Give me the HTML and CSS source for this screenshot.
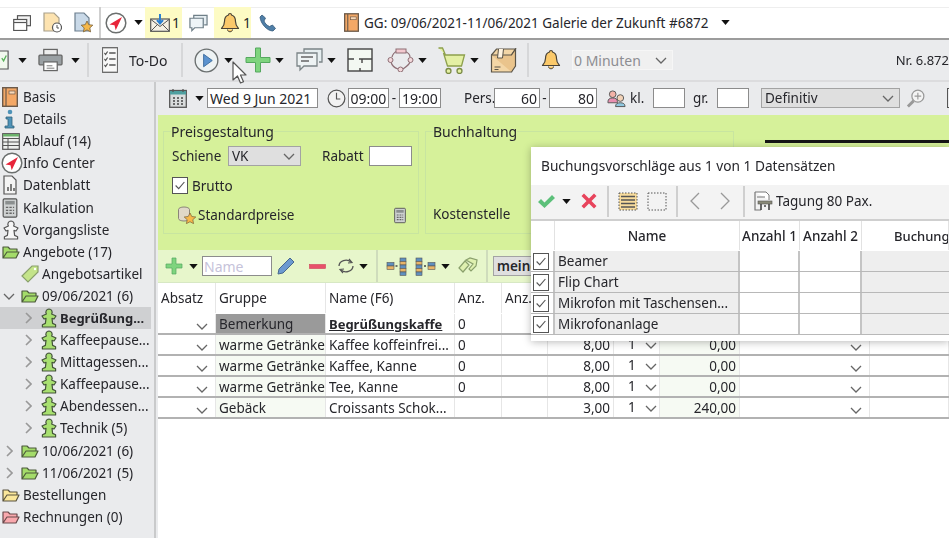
FILE: index.html
```html
<!DOCTYPE html>
<html lang="de">
<head>
<meta charset="utf-8">
<title>GG: Galerie der Zukunft</title>
<link rel="stylesheet" href="styles.css">
</head>
<body>
<svg class="defs" aria-hidden="true">
  <symbol id="caret" viewBox="0 0 10 6"><path d="M0 0h10L5 6z" fill="#111"/></symbol>
  <symbol id="chev" viewBox="0 0 12 7"><path d="M1 1l5 5 5-5" fill="none" stroke="#666" stroke-width="1.3"/></symbol>
  <symbol id="chevr" viewBox="0 0 7 12"><path d="M1 1l5 5-5 5" fill="none" stroke="#999" stroke-width="1.6"/></symbol>
  <symbol id="book" viewBox="0 0 16 20"><rect x=".7" y=".7" width="14.6" height="18.6" fill="#f4a866" stroke="#6c5a4a" stroke-width="1.4"/><path d="M4 1v18" stroke="#6c5a4a" stroke-width="1.2"/><rect x="7" y="4" width="6" height="3" fill="#f9d9b8" stroke="#6c5a4a" stroke-width=".7"/></symbol>
  <symbol id="folderG" viewBox="0 0 18 14"><path d="M1 13V2h5l2 2h7v3H5L1 13h13l3-6H5" fill="#a4dc6a" stroke="#4c5a3c" stroke-width="1.2" stroke-linejoin="round"/></symbol>
  <symbol id="folderY" viewBox="0 0 18 14"><path d="M1 13V2h5l2 2h7v3H5L1 13h13l3-6H5" fill="#fbe79a" stroke="#5a5440" stroke-width="1.2" stroke-linejoin="round"/></symbol>
  <symbol id="folderR" viewBox="0 0 18 14"><path d="M1 13V2h5l2 2h7v3H5L1 13h13l3-6H5" fill="#f9a8ad" stroke="#6a4a4c" stroke-width="1.2" stroke-linejoin="round"/></symbol>
  <symbol id="pawnG" viewBox="0 0 18 20"><path d="M9 1a3.2 3.2 0 0 1 2.6 5l4.4 2-2 3-2-.6.6 5 3 1.4V19H2.400v-2.200l3-1.400.6-5-2 .6-2-3 4.400-2A3.200 3.200 0 0 1 9 1z" fill="#a8e070" stroke="#44543a" stroke-width="1.200" stroke-linejoin="round"/></symbol>
  <symbol id="pawnW" viewBox="0 0 18 20"><path d="M9 1a3.2 3.2 0 0 1 2.6 5l4.4 2-2 3-2-.6.6 5 3 1.400V19H2.400v-2.200l3-1.400.6-5-2 .6-2-3 4.400-2A3.200 3.200 0 0 1 9 1z" fill="#f6f6f6" stroke="#555" stroke-width="1.200" stroke-linejoin="round"/></symbol>
  <symbol id="compass" viewBox="0 0 22 22"><circle cx="11" cy="11" r="9.800" fill="#fff" stroke="#6b6f6e" stroke-width="1.500"/><path d="M17 5L4.500 12.500l5 .8 1.200 5z" fill="#e8253a"/></symbol>
  <symbol id="calc" viewBox="0 0 13 17"><rect x=".7" y=".7" width="11.600" height="15.600" rx="1" fill="#cfd2d2" stroke="#555"/><rect x="2.500" y="2.500" width="8" height="3" fill="#8b8f8f"/><path d="M3 8h2M6 8h2M9 8h1M3 10.500h2M6 10.500h2M9 10.500h1M3 13h2M6 13h2M9 13h1" stroke="#666" stroke-width="1.200"/></symbol>
  <symbol id="bell" viewBox="0 0 20 22"><path d="M10 1.500c1 0 1.500.8 1.500 1.500 3 .8 4 3.500 4 6.500 0 3.500 1 5 3 7H1.500c2-2 3-3.500 3-7 0-3 1-5.700 4-6.500 0-.7.500-1.500 1.500-1.500z" fill="#fbc96a" stroke="#4a4336" stroke-width="1.200" stroke-linejoin="round"/><path d="M7.500 17.500c0 3 5 3 5 0" fill="#fbc96a" stroke="#4a4336"/></symbol>
  <symbol id="chat" viewBox="0 0 20 18"><path d="M5 4V1h14v10h-3" fill="#e6eef2" stroke="#6f7f88" stroke-width="1.300"/><path d="M1 4h14v10H6l-3 3v-3H1z" fill="#eef4f7" stroke="#6f7f88" stroke-width="1.300"/></symbol>
</svg>

<header class="titlebar">
  <svg class="ic t-win" viewBox="0 0 18 16"><rect x="4.500" y=".7" width="13" height="10" fill="#f3f3f3" stroke="#555" stroke-width="1.200"/><rect x=".7" y="4.500" width="13" height="11" fill="#fff" stroke="#555" stroke-width="1.200"/><path d="M1 7.500h12" stroke="#555" stroke-width="1.200"/></svg>
  <svg class="ic t-doc" viewBox="0 0 19 21"><path d="M1 1h10l5 5v13H1z" fill="#fde3b0" stroke="#a8a08c" stroke-width="1.200"/><circle cx="14" cy="15.500" r="4.500" fill="#fff" stroke="#555" stroke-width="1.200"/><path d="M14 13v3h2" fill="none" stroke="#555"/></svg>
  <svg class="ic t-doc2" viewBox="0 0 19 21"><path d="M1 1h9l5 5v13H1z" fill="#c9d9e8" stroke="#6c7e8e" stroke-width="1.200"/><path d="M13 9l1.800 3.700 4 .5-3 2.700.8 4-3.600-2-3.600 2 .8-4-3-2.700 4-.5z" fill="#f6b84a" stroke="#77603a" stroke-width=".8"/></svg>
  <span class="tsep"></span>
  <svg class="ic t-comp"><use href="#compass"/></svg>
  <svg class="caret t-caret"><use href="#caret"/></svg>
  <div class="badge t-mail">
    <svg class="ic mail" viewBox="0 0 20 18"><rect x=".7" y="5" width="18.600" height="12.300" fill="#f4f0e4" stroke="#555" stroke-width="1.200"/><path d="M1 5.500l9 7 9-7M1 17l7-7M19 17l-7-7" fill="none" stroke="#555"/><path d="M10 0v9M7 6l3 3.500L13 6" fill="none" stroke="#2a7fd0" stroke-width="2"/></svg>
    <span>1</span>
  </div>
  <svg class="ic t-chat"><use href="#chat"/></svg>
  <div class="badge t-bell">
    <svg class="ic bell1"><use href="#bell"/></svg>
    <span>1</span>
  </div>
  <svg class="ic t-phone" viewBox="0 0 18 18"><path d="M3 1l3.500 3-1.500 3c1 2.500 3 4.500 5.500 5.500l3-1.500 3 3.500-2.500 2.500C8 17 1.500 9.500 1 3z" fill="#4f7fa8" stroke="#35597a" stroke-width=".8"/></svg>
  <svg class="ic t-book"><use href="#book"/></svg>
  <span class="doc-title">GG: 09/06/2021-11/06/2021 Galerie der Zukunft #6872</span>
  <svg class="caret t-tcaret"><use href="#caret"/></svg>
</header>

<nav class="toolbar">
  <svg class="ic m-cut" viewBox="0 0 10 22"><path d="M-5 1H9v20H-5z" fill="#f2f8ee" stroke="#555" stroke-width="1.300"/><path d="M2 9l2 3 3-6" fill="none" stroke="#5bb25b" stroke-width="1.500"/></svg>
  <svg class="caret m-c1"><use href="#caret"/></svg>
  <svg class="ic m-print" viewBox="0 0 26 24"><rect x="6" y="1" width="14" height="6" fill="#eee" stroke="#666" stroke-width="1.300"/><rect x="1" y="7" width="24" height="10" rx="1" fill="#9aa0a3" stroke="#666" stroke-width="1.300"/><rect x="6" y="14" width="14" height="9" fill="#fff" stroke="#666" stroke-width="1.300"/><path d="M9 18h6M9 20.500h8" stroke="#777"/></svg>
  <svg class="caret m-c2"><use href="#caret"/></svg>
  <span class="sep m-s1"></span>
  <svg class="ic m-todo" viewBox="0 0 20 26" preserveAspectRatio="none"><rect x=".7" y=".7" width="18.600" height="24.600" fill="#f8f8f8" stroke="#666" stroke-width="1.300"/><path d="M3 6l1.500 1.500L7 4.500M3 12l1.500 1.500L7 10.500M3 18l1.500 1.500L7 16.500" fill="none" stroke="#555" stroke-width="1.200"/><path d="M9 6h8M9 12h8M9 18h8" stroke="#555" stroke-width="1.300"/></svg>
  <span class="tool-label">To-Do</span>
  <span class="sep m-s2"></span>
  <svg class="ic m-play" viewBox="0 0 26 26"><circle cx="13" cy="13" r="11.800" fill="#eef3f4" stroke="#6b7070" stroke-width="1.400"/><path d="M10 6.500l9 6.500-9 6.500z" fill="#5b93cf" stroke="#3f6f9f"/></svg>
  <svg class="caret m-c3"><use href="#caret"/></svg>
  <svg class="ic m-plus" viewBox="0 0 26 26"><path d="M10.500 1h5v9.500H25v5h-9.500V25h-5v-9.500H1v-5h9.500z" fill="#7ed47e" stroke="#55a85f"/></svg>
  <svg class="caret m-c4"><use href="#caret"/></svg>
  <svg class="ic m-chat" viewBox="0 0 27 24"><path d="M8 4V1h18v13h-3" fill="#e6eef0" stroke="#7b8487" stroke-width="1.300"/><path d="M1 5h20v13H8l-4 4v-4H1z" fill="#eef3f4" stroke="#7b8487" stroke-width="1.300"/><path d="M5 9h12M5 13h8" stroke="#666" stroke-width="1.300"/></svg>
  <svg class="caret m-c5"><use href="#caret"/></svg>
  <svg class="ic m-plan" viewBox="0 0 26 24"><rect x="1" y="1" width="24" height="22" fill="#f3f8f2" stroke="#444" stroke-width="1.400"/><path d="M1 11h6M12 11h13M15 11v4M13 23v-3" stroke="#444" stroke-width="1.400"/></svg>
  <svg class="ic m-flow" viewBox="0 0 27 24"><g fill="none" stroke="#8d6e74" stroke-width="1.200"><path d="M5 9c1-4 3-5 5-6M17 3c3 1 6 3 6 6M23 14c-1 3-4 5-7 7M11 21c-3-1-6-3-7-7"/></g><rect x="9" y="1" width="10" height="4" fill="#f3c9cf" stroke="#8d6e74"/><circle cx="3.500" cy="12" r="2.500" fill="#f3d8db" stroke="#8d6e74"/><circle cx="23.500" cy="12" r="2.500" fill="#f3d8db" stroke="#8d6e74"/><circle cx="13.500" cy="21.500" r="2.500" fill="#f3d8db" stroke="#8d6e74"/></svg>
  <svg class="caret m-c6"><use href="#caret"/></svg>
  <svg class="ic m-cart" viewBox="0 0 29 27"><path d="M1 1h4l3 7h19l-3 11H10L6 6" fill="#e4f0a4" stroke="#8da04c" stroke-width="1.300"/><circle cx="11" cy="24" r="2.500" fill="#e4f0a4" stroke="#7a8a44" stroke-width="1.300"/><circle cx="22" cy="24" r="2.500" fill="#e4f0a4" stroke="#7a8a44" stroke-width="1.300"/></svg>
  <svg class="caret m-c7"><use href="#caret"/></svg>
  <svg class="ic m-box" viewBox="0 0 26 25"><path d="M1 7l5-6h19l-4 6v17H1z" fill="#f3d6a6" stroke="#5a5448" stroke-width="1.200"/><path d="M1 7h20l4-6v17l-4 6" fill="#eac48c" stroke="#5a5448" stroke-width="1.200"/><path d="M8 1L7 10h5l1-9" fill="#fff3df" stroke="#5a5448"/><path d="M4 19h6M4 21.500h4" stroke="#5a5448"/></svg>
  <span class="sep m-s3"></span>
  <svg class="ic m-bell"><use href="#bell"/></svg>
  <div class="minutes"><span>0 Minuten</span><svg class="chev"><use href="#chev"/></svg></div>
  <span class="nr">Nr. 6.872</span>
</nav>

<div class="workspace">
  <aside class="tree">
    <div class="node l0"><svg class="ic ni"><use href="#book"/></svg>Basis</div>
    <div class="node l0"><svg class="ic ni" viewBox="0 0 16 20"><circle cx="8" cy="3" r="2.300" fill="#4f93b8"/><path d="M4 8h6v9h2v2H3v-2h3V10H4z" fill="#4f93b8" stroke="#33627c" stroke-width=".8"/></svg>Details</div>
    <div class="node l0"><svg class="ic ni-wide" viewBox="0 0 18 17"><rect x=".7" y=".7" width="16.600" height="15.600" fill="#eef0ee" stroke="#555" stroke-width="1.200"/><rect x="1" y="1" width="16" height="2.500" fill="#6bb26b"/><path d="M1 5.500h16M1 9h16M1 12.500h16M6 5.500v11" stroke="#555"/></svg>Ablauf (14)</div>
    <div class="node l0"><svg class="ic ni-comp"><use href="#compass"/></svg>Info Center</div>
    <div class="node l0"><svg class="ic ni" viewBox="0 0 16 20"><path d="M2 1h8l4 4v14H2z" fill="#f4f4f4" stroke="#555" stroke-width="1.200"/><path d="M6 16v-4M9 16V9M12 16v-3" stroke="#555" stroke-width="1.500"/></svg>Datenblatt</div>
    <div class="node l0"><svg class="ic ni"><use href="#calc"/></svg>Kalkulation</div>
    <div class="node l0"><svg class="ic pw"><use href="#pawnW"/></svg>Vorgangsliste</div>
    <div class="node l0"><svg class="ic fo"><use href="#folderG"/></svg>Angebote (17)</div>
    <div class="node l1"><svg class="ic tagi" viewBox="0 0 18 18"><path d="M1 11L11 1h6v6L7 17z" fill="#c4e48a" stroke="#8aa06c" stroke-width="1.200"/><circle cx="14" cy="4" r="1.200" fill="#fff"/></svg>Angebotsartikel</div>
    <div class="node l1 has-chev"><svg class="exp-d"><use href="#chev"/></svg><svg class="ic fo"><use href="#folderG"/></svg>09/06/2021 (6)</div>
    <div class="node l2 selected"><svg class="exp-r"><use href="#chevr"/></svg><svg class="ic pw"><use href="#pawnG"/></svg>Begrüßung...</div>
    <div class="node l2"><svg class="exp-r"><use href="#chevr"/></svg><svg class="ic pw"><use href="#pawnG"/></svg>Kaffeepause...</div>
    <div class="node l2"><svg class="exp-r"><use href="#chevr"/></svg><svg class="ic pw"><use href="#pawnG"/></svg>Mittagessen...</div>
    <div class="node l2"><svg class="exp-r"><use href="#chevr"/></svg><svg class="ic pw"><use href="#pawnG"/></svg>Kaffeepause...</div>
    <div class="node l2"><svg class="exp-r"><use href="#chevr"/></svg><svg class="ic pw"><use href="#pawnG"/></svg>Abendessen...</div>
    <div class="node l2"><svg class="exp-r"><use href="#chevr"/></svg><svg class="ic pw"><use href="#pawnG"/></svg>Technik (5)</div>
    <div class="node l1 has-chev"><svg class="exp-r1"><use href="#chevr"/></svg><svg class="ic fo"><use href="#folderG"/></svg>10/06/2021 (6)</div>
    <div class="node l1 has-chev"><svg class="exp-r1"><use href="#chevr"/></svg><svg class="ic fo"><use href="#folderG"/></svg>11/06/2021 (5)</div>
    <div class="node l0"><svg class="ic fo"><use href="#folderY"/></svg>Bestellungen</div>
    <div class="node l0"><svg class="ic fo"><use href="#folderR"/></svg>Rechnungen (0)</div>
  </aside>

  <main class="content">
    <div class="daterow">
      <svg class="ic d-cal" viewBox="0 0 18 20"><rect x=".7" y="2.500" width="16.600" height="16.800" fill="#d9dcdc" stroke="#555" stroke-width="1.300"/><rect x="1" y="3" width="16" height="3.500" fill="#4f9f9f"/><path d="M4 1v3M14 1v3" stroke="#555" stroke-width="1.300"/><path d="M4 10h2M8 10h2M12 10h2M4 13h2M8 13h2M12 13h2M4 16h2M8 16h2M12 16h2" stroke="#444" stroke-width="1.500"/></svg>
      <svg class="caret d-c"><use href="#caret"/></svg>
      <span class="box d-date">Wed 9 Jun 2021</span>
      <svg class="ic d-clock" viewBox="0 0 20 20"><circle cx="10" cy="10" r="8.800" fill="#f2f2f2" stroke="#555" stroke-width="1.300"/><path d="M10 4v6.500h4" fill="none" stroke="#555" stroke-width="1.200"/></svg>
      <span class="box d-time">09:00</span>
      <span class="dash">-</span>
      <span class="box d-time">19:00</span>
      <span class="lbl d-pers">Pers.</span>
      <span class="box d-num">60</span>
      <span class="dash d-d2">-</span>
      <span class="box d-num">80</span>
      <svg class="ic d-ppl" viewBox="0 0 20 19"><circle cx="6" cy="5" r="3.500" fill="#f3b3a8" stroke="#555"/><path d="M1 13c0-3 2-4 5-4s5 1 5 4v1H1z" fill="#e88fb0" stroke="#555"/><circle cx="14" cy="9" r="3.500" fill="#f3d3b8" stroke="#555"/><path d="M9 18c0-3 2-4 5-4s5 1 5 4z" fill="#8fc8e0" stroke="#555"/></svg>
      <span class="lbl d-kl">kl.</span>
      <span class="box d-sm"></span>
      <span class="lbl d-gr">gr.</span>
      <span class="box d-sm"></span>
      <div class="select d-status"><span>Definitiv</span><svg class="chev"><use href="#chev"/></svg></div>
      <svg class="ic d-zoom" viewBox="0 0 20 20"><circle cx="12.500" cy="7.500" r="6.300" fill="#f4f4f4" stroke="#999" stroke-width="1.300"/><path d="M12.500 4v7M9 7.500h7" stroke="#999" stroke-width="1.200"/><path d="M8 12.500L2 18.500" stroke="#999" stroke-width="3"/></svg>
      <span class="d-cut"></span>
    </div>

    <section class="green">
      <fieldset class="group g-price">
        <legend>Preisgestaltung</legend>
        <div class="frow">
          <span class="f-lab">Schiene</span>
          <div class="select s-vk"><span>VK</span><svg class="chev"><use href="#chev"/></svg></div>
          <span class="rabatt">Rabatt</span>
          <span class="box r-box"></span>
        </div>
        <label class="brutto"><span class="check"><svg viewBox="0 0 16 16"><path d="M3 8l3.500 3.500L13 4" fill="none" stroke="#555" stroke-width="1.300"/></svg></span>Brutto</label>
        <div class="frow std">
          <svg class="ic std-i" viewBox="0 0 19 18"><ellipse cx="7" cy="3.500" rx="5.500" ry="2.500" fill="#e0d8c8" stroke="#8a8478"/><path d="M1.500 3.500v9c0 1.500 2.500 2.500 5.500 2.500s5.500-1 5.500-2.500v-9" fill="#e0d8c8" stroke="#8a8478"/><path d="M13 7l1.800 3.500 4 .5-3 2.700.8 4-3.600-2-3.600 2 .8-4-3-2.700 4-.5z" fill="#f6b84a" stroke="#77603a" stroke-width=".7"/></svg>
          <span>Standardpreise</span>
          <svg class="ic std-c"><use href="#calc"/></svg>
        </div>
      </fieldset>
      <fieldset class="group g-book">
        <legend>Buchhaltung</legend>
        <div class="kst">Kostenstelle</div>
      </fieldset>
    </section>

    <div class="gridbar">
      <svg class="ic b-plus" viewBox="0 0 18 18"><path d="M7 1h4v6h6v4h-6v6H7v-6H1V7h6z" fill="#7ed47e" stroke="#55a85f" stroke-width=".7"/></svg>
      <svg class="caret b-c1"><use href="#caret"/></svg>
      <span class="box b-name">Name</span>
      <svg class="ic b-pen" viewBox="0 0 18 18"><path d="M1 17l1-5L13 1l4 4L6 16z" fill="#6c9ad0" stroke="#47688e"/></svg>
      <svg class="ic b-minus" viewBox="0 0 17 5"><rect x=".5" y=".5" width="16" height="4" fill="#e8506a" stroke="#d04058" stroke-width=".6"/></svg>
      <svg class="ic b-sync" viewBox="0 0 18 16"><path d="M2 8a7 6 0 0 1 12-4M16 8a7 6 0 0 1-12 4" fill="none" stroke="#555" stroke-width="1.300"/><path d="M12 1l3 3.500-4 .5M6 15l-3-3.500 4-.5" fill="none" stroke="#555" stroke-width="1.200"/></svg>
      <svg class="caret b-c2"><use href="#caret"/></svg>
      <span class="sep b-s1"></span>
      <svg class="ic b-tree1" viewBox="0 0 21 19"><g stroke="#555" stroke-width=".6"><rect x="14" y="1" width="6" height="3.400" fill="#5f8fbf"/><rect x="14" y="4.500" width="6" height="3.400" fill="#e8b468"/><rect x="14" y="8" width="6" height="3.400" fill="#5f8fbf"/><rect x="14" y="11.500" width="6" height="3.400" fill="#e8b468"/><rect x="14" y="15" width="6" height="3.400" fill="#5f8fbf"/><rect x="1" y="5.500" width="7" height="3.500" fill="#5f8fbf"/><rect x="1" y="9" width="7" height="3.500" fill="#e8b468"/></g><path d="M9.500 9h2" stroke="#444" stroke-width="1.500"/></svg>
      <svg class="ic b-tree2" viewBox="0 0 21 19"><g stroke="#555" stroke-width=".6"><rect x="1" y="1" width="6" height="3.400" fill="#5f8fbf"/><rect x="1" y="4.500" width="6" height="3.400" fill="#e8b468"/><rect x="1" y="8" width="6" height="3.400" fill="#5f8fbf"/><rect x="1" y="11.500" width="6" height="3.400" fill="#e8b468"/><rect x="1" y="15" width="6" height="3.400" fill="#5f8fbf"/><rect x="13" y="5.500" width="7" height="3.500" fill="#5f8fbf"/><rect x="13" y="9" width="7" height="3.500" fill="#e8b468"/></g><path d="M9 9h2" stroke="#444" stroke-width="1.500"/></svg>
      <svg class="caret b-c3"><use href="#caret"/></svg>
      <svg class="ic b-tag" viewBox="0 0 20 18"><path d="M1 11l6-7 4 4-6 7zM8 3l4-2 7 2-1 6-5 5-2-2 4-5z" fill="#dff0b0" stroke="#8aa06c" stroke-width="1.200"/></svg>
      <span class="sep b-s2"></span>
      <span class="select b-view">meine</span>
    </div>

    <div class="table">
      <div class="tr th">
        <span>Absatz</span><span>Gruppe</span><span>Name (F6)</span><span>Anz.</span><span>Anz.</span><span></span><span></span><span></span><span></span><span></span>
      </div>
      <div class="tr">
        <span class="c-abs"><svg class="chev"><use href="#chev"/></svg></span><span class="c-grp c-dark">Bemerkung</span><span class="c-name c-bold">Begrüßungskaffe</span><span>0</span><span></span><span></span><span></span><span></span><span></span><span></span>
      </div>
      <div class="tr">
        <span class="c-abs"><svg class="chev"><use href="#chev"/></svg></span><span class="c-grp">warme Getränke</span><span class="c-name">Kaffee koffeinfrei...</span><span>0</span><span></span><span class="num">8,00</span><span class="c-qty">1<svg class="chev"><use href="#chev"/></svg></span><span class="num c-tint">0,00</span><span class="c-abs"><svg class="chev"><use href="#chev"/></svg></span><span></span>
      </div>
      <div class="tr">
        <span class="c-abs"><svg class="chev"><use href="#chev"/></svg></span><span class="c-grp">warme Getränke</span><span class="c-name">Kaffee, Kanne</span><span>0</span><span></span><span class="num">8,00</span><span class="c-qty">1<svg class="chev"><use href="#chev"/></svg></span><span class="num c-tint">0,00</span><span class="c-abs"><svg class="chev"><use href="#chev"/></svg></span><span></span>
      </div>
      <div class="tr">
        <span class="c-abs"><svg class="chev"><use href="#chev"/></svg></span><span class="c-grp">warme Getränke</span><span class="c-name">Tee, Kanne</span><span>0</span><span></span><span class="num">8,00</span><span class="c-qty">1<svg class="chev"><use href="#chev"/></svg></span><span class="num c-tint">0,00</span><span class="c-abs"><svg class="chev"><use href="#chev"/></svg></span><span></span>
      </div>
      <div class="tr">
        <span class="c-abs"><svg class="chev"><use href="#chev"/></svg></span><span class="c-grp">Gebäck</span><span class="c-name">Croissants Schok...</span><span></span><span></span><span class="num">3,00</span><span class="c-qty">1<svg class="chev"><use href="#chev"/></svg></span><span class="num c-tint">240,00</span><span class="c-abs"><svg class="chev"><use href="#chev"/></svg></span><span></span>
      </div>
    </div>
  </main>
</div>

<div class="heavy-line"></div>

<section class="popup">
  <div class="pop-title">Buchungsvorschläge aus 1 von 1 Datensätzen</div>
  <div class="pop-bar">
    <svg class="ic p-ok" viewBox="0 0 19 15"><path d="M1 8l3-3 3.500 3.500L15 1l3 3L7.500 14z" fill="#5cc07a"/></svg>
    <svg class="caret p-c"><use href="#caret"/></svg>
    <svg class="ic p-x" viewBox="0 0 16 16"><path d="M3 0.500L8 5.500l5-5 2.500 2.500-5 5 5 5-2.500 2.500-5-5-5 5L.5 13l5-5-5-5z" fill="#e8445c"/></svg>
    <span class="sep p-s1"></span>
    <svg class="ic p-all" viewBox="0 0 20 19"><rect x="1" y="1" width="18" height="17" fill="#f8dc9c" stroke="#555" stroke-dasharray="1.500 1.500"/><path d="M3 4.500h14M3 8h14M3 11.500h14M3 15h14" stroke="#555" stroke-width="1.300"/></svg>
    <svg class="ic p-none" viewBox="0 0 20 19"><rect x="1" y="1" width="18" height="17" fill="none" stroke="#555" stroke-dasharray="1.500 1.500"/></svg>
    <span class="sep p-s2"></span>
    <svg class="ic p-prev" viewBox="0 0 10 18"><path d="M9 1L1 9l8 8" fill="none" stroke="#999" stroke-width="1.300"/></svg>
    <svg class="ic p-next" viewBox="0 0 10 18"><path d="M1 1l8 8-8 8" fill="none" stroke="#999" stroke-width="1.300"/></svg>
    <span class="sep p-s3"></span>
    <svg class="ic p-room" viewBox="0 0 19 20"><path d="M1 1h11l3 3v5" fill="#fff" stroke="#777"/><path d="M1 1v18h6" fill="none" stroke="#777" stroke-width="1.200"/><path d="M3 6h8" stroke="#777"/><rect x="4" y="10" width="14" height="3" fill="#8a8a78" stroke="#555" stroke-width=".6"/><path d="M7 13v6M15 13v6M10 15h2" stroke="#444" stroke-width="1.600"/></svg>
    <span class="p-label">Tagung 80 Pax.</span>
  </div>
  <div class="pop-tr pop-th">
    <span></span><span class="center">Name</span><span class="center">Anzahl 1</span><span class="center">Anzahl 2</span><span class="center p-buch">Buchung</span>
  </div>
  <div class="pop-tr"><span class="p-cb"><span class="check"><svg viewBox="0 0 16 16"><path d="M3 8l3.500 3.500L13 4" fill="none" stroke="#555" stroke-width="1.300"/></svg></span></span><span class="p-name">Beamer</span><span class="p-w"></span><span class="p-w"></span><span class="p-name"></span></div>
  <div class="pop-tr"><span class="p-cb"><span class="check"><svg viewBox="0 0 16 16"><path d="M3 8l3.500 3.500L13 4" fill="none" stroke="#555" stroke-width="1.300"/></svg></span></span><span class="p-name">Flip Chart</span><span class="p-w"></span><span class="p-w"></span><span class="p-name"></span></div>
  <div class="pop-tr"><span class="p-cb"><span class="check"><svg viewBox="0 0 16 16"><path d="M3 8l3.500 3.500L13 4" fill="none" stroke="#555" stroke-width="1.300"/></svg></span></span><span class="p-name">Mikrofon mit Taschensen...</span><span class="p-w"></span><span class="p-w"></span><span class="p-name"></span></div>
  <div class="pop-tr"><span class="p-cb"><span class="check"><svg viewBox="0 0 16 16"><path d="M3 8l3.500 3.500L13 4" fill="none" stroke="#555" stroke-width="1.300"/></svg></span></span><span class="p-name">Mikrofonanlage</span><span class="p-w"></span><span class="p-w"></span><span class="p-name"></span></div>
</section>

<svg class="cursor" viewBox="0 0 16 24"><path d="M1 1v18l4.500-4 3 7 3-1.300-3-6.700H14z" fill="#fff" stroke="#555" stroke-width="1.200" stroke-linejoin="round"/></svg>
</body>
</html>
```

FILE: styles.css
```css
* { box-sizing: border-box; }
html, body { margin: 0; padding: 0; }
body {
  width: 949px; height: 538px; overflow: hidden; position: relative;
  font-family: "Noto Sans", "Liberation Sans", sans-serif;
  font-size: 13.5px; color: #26262b; background: #eaebed;
  filter: blur(.35px);
}
.defs { position: absolute; width: 0; height: 0; }
.ic { display: block; flex: none; }
.caret { display: block; flex: none; width: 9px; height: 5px; }
.chev { display: block; flex: none; width: 12px; height: 7px; }

.titlebar {
  height: 40px; display: flex; align-items: center;
  background: linear-gradient(#fff 7px, #eeeeee 7px, #eeeeee 8px, #fff 8px);
  padding: 7px 0 0 13px; border-bottom: 2px solid #9c9c9c;
  white-space: nowrap;
}
.t-win { width: 18px; height: 16px; }
.t-doc { width: 19px; height: 21px; margin-left: 12px; }
.t-doc2 { width: 19px; height: 21px; margin-left: 12px; }
.tsep { width: 2px; align-self: stretch; background: #cfcfcf; margin-left: 6px; }
.t-comp { width: 22px; height: 22px; margin-left: 4px; }
.t-caret { margin-left: 7px; }
.badge { display: flex; align-items: center; align-self: stretch; background: #fdfbc4; width: 37px; font-size: 14px; }
.t-mail { margin-left: 2px; padding-left: 5px; }
.mail { width: 20px; height: 18px; margin-right: 2px; }
.t-chat { width: 19px; height: 18px; margin-left: 7px; }
.t-bell { margin-left: 6px; padding-left: 6px; }
.bell1 { width: 20px; height: 22px; margin-right: 3px; }
.t-phone { width: 18px; height: 18px; margin-left: 8px; }
.t-book { width: 15px; height: 19px; margin-left: 67px; }
.doc-title { margin-left: 5px; }
.t-tcaret { margin-left: 12px; }

.toolbar { height: 42px; display: flex; align-items: center; white-space: nowrap; border-bottom: 2px solid #dcdcde; }
.sep { width: 2px; height: 34px; background: #d6d7d9; flex: none; }
.m-cut { width: 9px; height: 22px; }
.m-c1 { margin-left: 9px; }
.m-print { width: 25px; height: 24px; margin-left: 11px; }
.m-c2 { margin-left: 8px; }
.m-s1 { margin-left: 7px; }
.m-todo { width: 16px; height: 26px; margin-left: 13px; }
.tool-label { margin-left: 11px; width: 39px; font-size: 14px; }
.m-s2 { margin-left: 13px; }
.m-play { width: 25px; height: 25px; margin-left: 11px; }
.m-c3 { margin-left: 5px; }
.m-plus { width: 26px; height: 26px; margin-left: 12px; }
.m-c4 { margin-left: 4px; }
.m-chat { width: 27px; height: 24px; margin-left: 12px; }
.m-c5 { margin-left: 4px; }
.m-plan { width: 26px; height: 24px; margin-left: 11px; }
.m-flow { width: 27px; height: 24px; margin-left: 14px; }
.m-c6 { margin-left: 4px; }
.m-cart { width: 30px; height: 27px; margin-left: 10px; }
.m-c7 { margin-left: 3px; }
.m-box { width: 27px; height: 25px; margin-left: 11px; }
.m-s3 { margin-left: 10px; }
.m-bell { width: 20px; height: 24px; margin-left: 12px; }
.minutes {
  width: 101px; height: 20px; margin-left: 11px; background: #f0f0f0; border: 1px solid #f6f6f6;
  display: flex; align-items: center; justify-content: space-between; padding: 0 5px 0 1px; color: #8d8d92; font-size: 14px;
}
.nr { margin-left: auto; font-size: 13px; }

.workspace { display: flex; height: 456px; }
.tree { width: 156px; flex: none; border-right: 2px solid #c9cacb; padding: 4px 3px 0 0; overflow: hidden; }
.node { height: 22.100px; display: flex; align-items: center; white-space: nowrap; position: relative; }
.ni { width: 16px; height: 20px; margin-right: 5px; }
.ni-wide { width: 18px; height: 17px; margin-right: 3px; }
.ni-comp { width: 22px; height: 22px; margin-left: -1px; }
.fo { width: 18px; height: 14px; margin-right: 3px; }
.pw { width: 18px; height: 20px; margin-right: 3px; }
.tagi { width: 18px; height: 18px; margin-right: 3px; }
.l0 { padding-left: 2px; }
.l1 { padding-left: 21px; }
.l2 { padding-left: 40px; }
.l2 .pw { margin-right: 2px; }
.exp-d { position: absolute; left: 3px; top: 8px; width: 12px; height: 7px; }
.exp-r { position: absolute; left: 25px; top: 5px; width: 7px; height: 12px; }
.exp-r1 { position: absolute; left: 6px; top: 5px; width: 7px; height: 12px; }
.selected { background: #cfd0d2; font-weight: 700; font-size: 13px; }

.content { flex: 1; min-width: 0; overflow: hidden; padding-left: 2px; }
.daterow { height: 33px; display: flex; align-items: center; white-space: nowrap; padding: 0 0 1px 0; }
.box { display: flex; align-items: center; background: #fff; border: 1px solid #8c8c8c; height: 20px; flex: none; }
.lbl { flex: none; }
.dash { width: 10px; text-align: center; flex: none; }
.d-cal { width: 18px; height: 20px; margin-left: 11px; }
.d-c { margin-left: 8px; }
.d-date { width: 111px; margin-left: 3px; padding-left: 2px; font-size: 14px; }
.d-clock { width: 19px; height: 19px; margin-left: 9px; }
.d-time { width: 41px; margin-left: 2px; justify-content: center; font-size: 14px; }
.dash + .d-time { margin-left: 0; width: 42px; }
.d-pers { margin-left: 23px; width: 30px; }
.d-num { width: 46px; justify-content: flex-end; padding-right: 2px; font-size: 14px; }
.d-d2 { width: 9px; }
.d-d2 + .d-num { width: 48px; }
.d-ppl { width: 19px; height: 19px; margin-left: 10px; }
.d-kl { margin-left: 4px; width: 23px; }
.d-sm { width: 32px; }
.d-gr { margin-left: 8px; width: 24px; }
.d-status { width: 139px; margin-left: 12px; }
.d-zoom { width: 19px; height: 19px; margin-left: 6px; }
.d-cut { width: 10px; height: 20px; border: 1px solid #555; margin-left: 22px; flex: none; }

.select {
  display: flex; align-items: center; justify-content: space-between; height: 20px; flex: none;
  background: #dfdfdf; border: 1px solid #a3a3a3; padding: 0 5px 0 3px;
}

.green { height: 135px; background: #d6f19a; padding: 7px 0 0 5px; display: flex; }
.group { margin: 0; border: 1px solid #c8e5a0; padding: 0; height: 112px; flex: none; min-width: 0; }
.group legend { padding: 0; margin-left: 7px; font-size: 14px; line-height: 19px; white-space: nowrap; }
.g-price { width: 256px; }
.g-book { width: 309px; margin-left: 6px; }
.frow { display: flex; align-items: center; height: 20px; padding-left: 8px; margin-top: 5px; }
.f-lab { width: 56px; }
.s-vk { width: 73px; }
.rabatt { margin-left: 21px; width: 42px; }
.r-box { width: 43px; margin-left: 5px; }
.brutto { display: flex; align-items: center; padding-left: 8px; margin-top: 11px; height: 17px; }
.check { display: block; width: 16px; height: 17px; border: 1px solid #555; background: #fff; margin-right: 4px; flex: none; }
.check svg { display: block; width: 100%; height: 100%; }
.std { margin-top: 11px; padding-left: 13px; }
.std-i { width: 19px; height: 18px; margin-right: 2px; }
.std-c { width: 12px; height: 17px; margin-left: auto; margin-right: 12px; }
.kst { margin: 63px 0 0 7px; line-height: 20px; }

.gridbar { height: 33px; background: #e7f6cb; display: flex; align-items: center; border-bottom: 1px solid #d7e8c4; }
.gridbar .sep { height: 32px; background: #cfdcbc; }
.b-plus { width: 18px; height: 18px; margin-left: 7px; }
.b-c1 { margin-left: 6px; }
.b-name { width: 70px; margin-left: 4px; padding-left: 1px; color: #c6c3da; font-size: 14px; }
.b-pen { width: 18px; height: 18px; margin-left: 5px; }
.b-minus { width: 17px; height: 5px; margin-left: 14px; }
.b-sync { width: 18px; height: 16px; margin-left: 11px; }
.b-c2 { margin-left: 4px; }
.b-s1 { margin-left: 8px; }
.b-tree1 { width: 21px; height: 19px; margin-left: 8px; }
.b-tree2 { width: 21px; height: 19px; margin-left: 8px; }
.b-c3 { margin-left: 5px; }
.b-tag { width: 20px; height: 18px; margin-left: 8px; }
.b-s2 { margin-left: 8px; }
.b-view { margin-left: 5px; width: 80px; font-weight: 600; }

.table { background: #fff; height: 255px; }
.tr {
  display: grid; grid-template-columns: 58px 110px 129px 47px 46px 66px 46px 80px 130px 79px;
  height: 21px; border-bottom: 2px solid #b2b2b2; width: 791px;
}
.tr > span { display: flex; align-items: center; padding-left: 3px; border-right: 1px solid #e6e6e6; white-space: nowrap; overflow: hidden; }
.tr.th { height: 31px; border-bottom: 0; padding-bottom: 1px; }
.c-abs { justify-content: flex-end; padding: 6px 7px 0 0 !important; }
.c-grp { background: #f6faf3; }
.c-dark { background: #9a9a9a; }
.c-bold { font-weight: 700; text-decoration: underline; font-size: 13px; }
.num { justify-content: flex-end; padding: 0 3px 0 0 !important; }
.c-qty { padding-left: 14px !important; padding-bottom: 2px; gap: 9px; }
.c-qty .chev { margin-top: 4px; }
.c-tint { background: #f6faf3; }

.heavy-line { position: absolute; left: 765px; top: 140px; right: 0; height: 3px; background: #161616; }

.popup {
  position: absolute; left: 531px; top: 147px; width: 418px; height: 194px; background: #fff;
  box-shadow: 0 1px 8px rgba(0,0,0,.28);
}
.pop-title { height: 38px; display: flex; align-items: center; padding: 0 0 2px 10px; font-size: 13.700px; }
.pop-bar { height: 36px; display: flex; align-items: center; background: #f3f3f3; border-bottom: 2px solid #cfcfcf; padding-bottom: 2px; }
.pop-bar .sep { height: 31px; background: #cfcfcf; }
.p-ok { width: 19px; height: 15px; margin-left: 6px; }
.p-c { margin-left: 6px; }
.p-x { width: 16px; height: 16px; margin-left: 10px; }
.p-s1 { margin-left: 10px; }
.p-all { width: 20px; height: 19px; margin-left: 9px; }
.p-none { width: 20px; height: 19px; margin-left: 9px; }
.p-s2 { margin-left: 9px; }
.p-prev { width: 10px; height: 18px; margin-left: 12px; }
.p-next { width: 10px; height: 18px; margin-left: 20px; }
.p-s3 { margin-left: 13px; }
.p-room { width: 19px; height: 20px; margin-left: 9px; }
.p-label { margin-left: 3px; }
.pop-tr {
  display: grid; grid-template-columns: 24px 185px 60px 62px 87px; height: 21px;
  border-bottom: 1px solid #b8b8b8;
}
.pop-tr > span { display: flex; align-items: center; border-right: 2px solid #c4c4c4; white-space: nowrap; overflow: hidden; }
.pop-tr > span:last-child { border-right: 0; }
.pop-tr.pop-th { height: 30px; border-bottom: 0; padding-bottom: 1px; font-weight: 500; }
.pop-th > span { border-right: 1px solid #e2e2e2 !important; }
.center { justify-content: center; }
.p-buch { justify-content: flex-start !important; padding-left: 32px; font-size: 13px; }
.p-cb { padding-left: 2px; background: #fff; }
.p-name { background: #eeeeee; padding-left: 3px; }
.p-w { background: #fff; }

.cursor { position: absolute; left: 232px; top: 61px; width: 16px; height: 24px; }
```
